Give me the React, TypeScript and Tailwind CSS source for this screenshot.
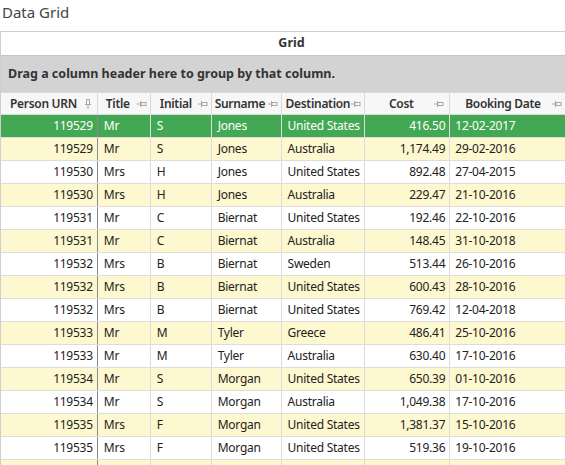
import React from "react";

type Row = [string, string, string, string, string, string, string];

const rows: Row[] = [
  ["119529", "Mr", "S", "Jones", "United States", "416.50", "12-02-2017"],
  ["119529", "Mr", "S", "Jones", "Australia", "1,174.49", "29-02-2016"],
  ["119530", "Mrs", "H", "Jones", "United States", "892.48", "27-04-2015"],
  ["119530", "Mrs", "H", "Jones", "Australia", "229.47", "21-10-2016"],
  ["119531", "Mr", "C", "Biernat", "United States", "192.46", "22-10-2016"],
  ["119531", "Mr", "C", "Biernat", "Australia", "148.45", "31-10-2018"],
  ["119532", "Mrs", "B", "Biernat", "Sweden", "513.44", "26-10-2016"],
  ["119532", "Mrs", "B", "Biernat", "United States", "600.43", "28-10-2016"],
  ["119532", "Mrs", "B", "Biernat", "United States", "769.42", "12-04-2018"],
  ["119533", "Mr", "M", "Tyler", "Greece", "486.41", "25-10-2016"],
  ["119533", "Mr", "M", "Tyler", "Australia", "630.40", "17-10-2016"],
  ["119534", "Mr", "S", "Morgan", "United States", "650.39", "01-10-2016"],
  ["119534", "Mr", "S", "Morgan", "Australia", "1,049.38", "17-10-2016"],
  ["119535", "Mrs", "F", "Morgan", "United States", "1,381.37", "15-10-2016"],
  ["119535", "Mrs", "F", "Morgan", "United States", "519.36", "19-10-2016"],
  ["", "", "", "", "", "", ""],
];

function PinH() {
  return (
    <svg width="10" height="8" viewBox="0 0 10 8" className="shrink-0">
      <line x1="0" y1="4" x2="3" y2="4" stroke="#a8a8a8" strokeWidth="1" />
      <line x1="3.5" y1="1" x2="3.5" y2="7" stroke="#a8a8a8" strokeWidth="1" />
      <rect x="4" y="2.5" width="5" height="3" fill="none" stroke="#a8a8a8" strokeWidth="1" />
    </svg>
  );
}

function PinV() {
  return (
    <svg width="8" height="10" viewBox="0 0 8 10" className="shrink-0">
      <rect x="2.5" y="0.5" width="3" height="5" fill="none" stroke="#a8a8a8" strokeWidth="1" />
      <line x1="1" y1="5.5" x2="7" y2="5.5" stroke="#a8a8a8" strokeWidth="1" />
      <line x1="4" y1="6" x2="4" y2="10" stroke="#a8a8a8" strokeWidth="1" />
    </svg>
  );
}

const font = { fontFamily: '"Noto Sans", "Open Sans", sans-serif' };

export default function App() {
  return (
    <div className="w-[565px] h-[465px] overflow-hidden bg-white text-[12px] text-[#222]" style={font}>
      <div className="h-[31px] pl-[2px] pt-[1px] text-[15px] text-[#444] leading-[22px]">Data Grid</div>
      <div className="w-[582px] border-t border-l border-[#cfcfcf]">
        <div className="h-[23px] flex items-center justify-center font-bold text-[12.5px] text-[#333]">Grid</div>
        <div className="h-[37px] bg-[#d3d3d3] border-t border-[#c4c4c4] flex items-center pl-[7px] font-bold text-[12.5px] text-[#333]">
          Drag a column header here to group by that column.
        </div>
        <div className="h-[23px] flex bg-[#f7f7f7] border-t border-b border-[#d9d9d9] font-semibold text-[#333] leading-none tracking-[-0.3px]">
          <div className="w-[97px] border-r border-[#d9d9d9] flex items-center justify-between pl-[9px] pr-[5px]">
            <span>Person URN</span>
            <PinV />
          </div>
          <div className="w-[53px] border-r border-[#d9d9d9] flex items-center justify-between pl-[8px] pr-[3px]">
            <span>Title</span>
            <PinH />
          </div>
          <div className="w-[61px] border-r border-[#d9d9d9] flex items-center justify-between pl-[9px] pr-[3px]">
            <span>Initial</span>
            <PinH />
          </div>
          <div className="w-[70px] border-r border-[#d9d9d9] flex items-center justify-between pl-[3px] pr-[3px]">
            <span>Surname</span>
            <PinH />
          </div>
          <div className="w-[84px] border-r border-[#d9d9d9] flex items-center justify-between pl-[4px] pr-[3px]">
            <span>Destination</span>
            <PinH />
          </div>
          <div className="w-[85px] border-r border-[#d9d9d9] flex items-center pl-[3px] pr-[5px]">
            <span className="flex-1 text-center">Cost</span>
            <PinH />
          </div>
          <div className="w-[132px] flex items-center justify-between pl-[15px] pr-[20px]">
            <span>Booking Date</span>
            <PinH />
          </div>
        </div>
        {rows.map((r, i) => {
          const sel = i === 0;
          const bg = sel ? "bg-[#43a854] text-white" : i % 2 === 1 ? "bg-[#fdf8cf]" : "bg-white";
          return (
            <div key={i} className={`h-[23px] flex border-b border-[#dcdcdc] tracking-[-0.25px] ${bg}`}>
              <div className="w-[97px] border-r border-[#8a8a8a] flex items-center justify-end pr-[4px]">{r[0]}</div>
              <div className="w-[53px] border-r border-[#dcdcdc] flex items-center pl-[6px]">{r[1]}</div>
              <div className="w-[61px] border-r border-[#dcdcdc] flex items-center pl-[6px]">{r[2]}</div>
              <div className="w-[70px] border-r border-[#dcdcdc] flex items-center pl-[6px]">{r[3]}</div>
              <div className="w-[84px] border-r border-[#dcdcdc] flex items-center pl-[6px]">{r[4]}</div>
              <div className="w-[85px] border-r border-[#dcdcdc] flex items-center justify-end pr-[4px]">{r[5]}</div>
              <div className="w-[132px] flex items-center pl-[5px]">{r[6]}</div>
            </div>
          );
        })}
      </div>
    </div>
  );
}
